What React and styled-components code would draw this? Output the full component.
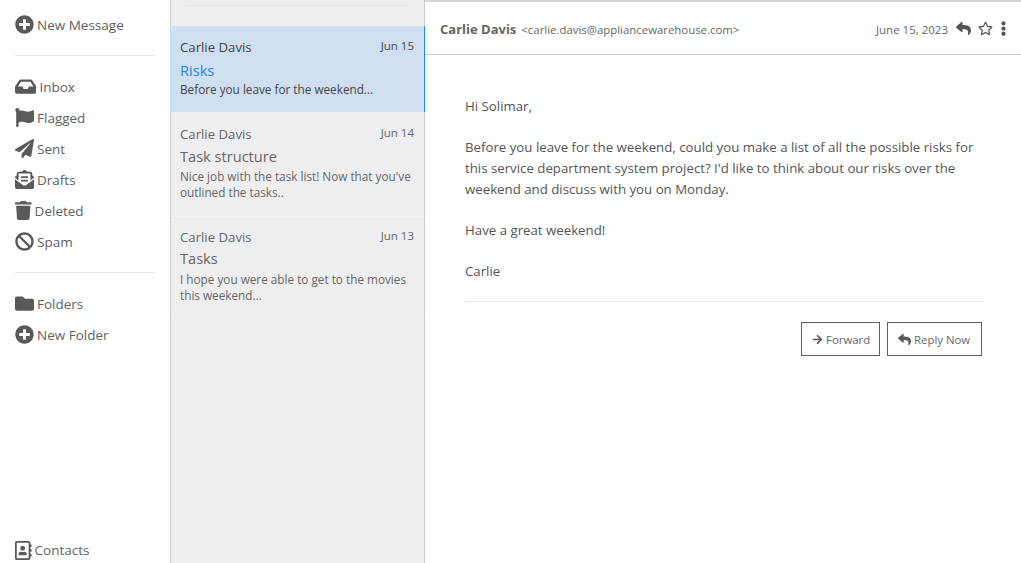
import React from "react";
import styled, { createGlobalStyle } from "styled-components";
import {
  FaPlusCircle, FaInbox, FaFlag, FaPaperPlane, FaEnvelopeOpenText, FaTrash, FaBan,
  FaFolder, FaRegAddressBook, FaReply, FaRegStar, FaEllipsisV, FaArrowRight,
} from "react-icons/fa";

const Global = createGlobalStyle`
  html, body { margin: 0; padding: 0; height: 100%; background: #fff; }
  body { font-family: "Open Sans", "Liberation Sans", sans-serif; color: #555; overflow: hidden; }
  #root { height: 100%; }
`;

const Page = styled.div`
  display: flex;
  width: 1021px;
  height: 563px;
  overflow: hidden;
`;

const Sidebar = styled.nav`
  width: 170px;
  flex: none;
  box-sizing: border-box;
  padding: 9px 15px 0;
  display: flex;
  flex-direction: column;
  background: #fff;
`;

const NavItem = styled.a`
  display: flex;
  align-items: center;
  height: ${(p) => p.$height ?? 31}px;
  font-size: 13.5px;
  color: #5f5f5f;
  gap: 3px;
  svg { height: 19px; width: ${(p) => p.$iconWidth ?? 19}px; color: #5a5a5a; flex: none; }
`;

const Rule = styled.hr`
  border: 0;
  border-top: 1px solid #e4e4e4;
  margin: ${(p) => p.$margin};
`;

const Spacer = styled.div`
  flex: 1;
`;

const List = styled.section`
  width: 255px;
  flex: none;
  box-sizing: border-box;
  background: #eee;
  border-left: 1px solid #ccc;
  border-right: 1px solid #ccc;
  display: flex;
  flex-direction: column;
`;

const ListTop = styled.div`
  height: 26px;
  padding: 5px 15px 0;
  box-sizing: border-box;
`;

const Card = styled.article`
  box-sizing: border-box;
  height: ${(p) => p.$height}px;
  padding: ${(p) => p.$top}px 10px 0 9px;
  margin: 0 -1px;
  background: ${(p) => (p.$active ? "#cfdff0" : "#eee")};
  border-left: 1px solid ${(p) => (p.$active ? "#cfdff0" : "#ccc")};
  border-right: 1px solid ${(p) => (p.$active ? "#1e88e5" : "#ccc")};
  border-top: ${(p) => (p.$sep ? "1px solid #f3f3f3" : "0")};
  border-bottom: ${(p) => (p.$sep ? "1px solid #f3f3f3" : "0")};
  color: ${(p) => (p.$active ? "#444" : "#666")};
`;

const CardHead = styled.div`
  display: flex;
  justify-content: space-between;
  align-items: flex-start;
`;

const Sender = styled.span`
  font-size: 13.2px;
  line-height: 20px;
`;

const CardDate = styled.span`
  font-size: 11.5px;
  line-height: 17px;
`;

const Subject = styled.h3`
  margin: ${(p) => p.$gap}px 0 0;
  font-size: 14.6px;
  line-height: 21px;
  font-weight: 400;
  color: ${(p) => (p.$active ? "#1e88e5" : "#666")};
`;

const Preview = styled.p`
  margin: ${(p) => p.$gap}px 0 0;
  font-size: 11.75px;
  line-height: 15.5px;
`;

const Main = styled.main`
  flex: 1;
  min-width: 0;
  display: flex;
  flex-direction: column;
  border-top: 2px solid #d4d4d4;
`;

const Header = styled.header`
  height: 53px;
  flex: none;
  box-sizing: border-box;
  border-bottom: 1px solid #ccc;
  padding: 0 10px 0 15px;
  display: flex;
  align-items: center;
`;

const FromName = styled.strong`
  font-size: 13px;
  font-weight: 700;
  color: #666;
  padding-top: 2px;
`;

const FromMail = styled.span`
  font-size: 11.4px;
  color: #666;
  margin-left: 5px;
  padding-top: 2px;
`;

const HeaderDate = styled.span`
  margin-left: auto;
  font-size: 11.5px;
  color: #666;
  padding-top: 2px;
`;

const HeaderIcons = styled.div`
  display: flex;
  align-items: center;
  gap: 7px;
  margin-left: 8px;
  color: #555;
  svg { font-size: 15px; }
  svg:last-child { margin-left: -4px; }
`;

const Body = styled.div`
  padding: 41px 39px 0 40px;
`;

const Para = styled.p`
  margin: 0 0 20px;
  font-size: 13.26px;
  line-height: 21px;
  color: #555;
`;

const Actions = styled.div`
  display: flex;
  justify-content: flex-end;
  gap: 7px;
`;

const Button = styled.button`
  box-sizing: border-box;
  width: ${(p) => p.$width}px;
  height: 34px;
  padding: 0 0 0 10px;
  border: 1px solid #5f5f5f;
  background: #fff;
  font: 400 11.4px "Open Sans", sans-serif;
  color: #666;
  display: flex;
  align-items: center;
  gap: 3px;
  white-space: nowrap;
  svg { font-size: ${(p) => p.$icon}px; color: #5a5a5a; flex: none; }
`;

const messages = [
  { date: "Jun 15", subject: "Risks", preview: "Before you leave for the weekend...", active: true, height: 86, top: 11, gap: 3, previewGap: 1 },
  { date: "Jun 14", subject: "Task structure", preview: "Nice job with the task list! Now that you've outlined the tasks..", height: 104, top: 12, gap: 2, previewGap: 2 },
  { date: "Jun 13", subject: "Tasks", preview: "I hope you were able to get to the movies this weekend...", sep: true, height: 103, top: 10, gap: 1, previewGap: 3 },
];

export default function App() {
  return (
    <Page>
      <Global />
      <Sidebar>
        <NavItem><FaPlusCircle />New Message</NavItem>
        <Rule $margin="15px 0 15px" />
        <NavItem $iconWidth={21.4}><FaInbox />Inbox</NavItem>
        <NavItem><FaFlag />Flagged</NavItem>
        <NavItem><FaPaperPlane />Sent</NavItem>
        <NavItem><FaEnvelopeOpenText />Drafts</NavItem>
        <NavItem $iconWidth={16.6}><FaTrash />Deleted</NavItem>
        <NavItem><FaBan />Spam</NavItem>
        <Rule $margin="15px 0 15px" />
        <NavItem><FaFolder />Folders</NavItem>
        <NavItem><FaPlusCircle />New Folder</NavItem>
        <Spacer />
        <NavItem $height={26} $iconWidth={16.6}><FaRegAddressBook />Contacts</NavItem>
      </Sidebar>
      <List>
        <ListTop><Rule $margin="0" /></ListTop>
        {messages.map((m) => (
          <Card key={m.date} $active={m.active} $sep={m.sep} $height={m.height} $top={m.top}>
            <CardHead>
              <Sender>Carlie Davis</Sender>
              <CardDate>{m.date}</CardDate>
            </CardHead>
            <Subject $active={m.active} $gap={m.gap}>{m.subject}</Subject>
            <Preview $gap={m.previewGap}>{m.preview}</Preview>
          </Card>
        ))}
      </List>
      <Main>
        <Header>
          <FromName>Carlie Davis</FromName>
          <FromMail>&lt;carlie.davis@appliancewarehouse.com&gt;</FromMail>
          <HeaderDate>June 15, 2023</HeaderDate>
          <HeaderIcons><FaReply /><FaRegStar /><FaEllipsisV /></HeaderIcons>
        </Header>
        <Body>
          <Para>Hi Solimar,</Para>
          <Para>Before you leave for the weekend, could you make a list of all the possible risks for this service department system project? I'd like to think about our risks over the weekend and discuss with you on Monday.</Para>
          <Para>Have a great weekend!</Para>
          <Para>Carlie</Para>
          <Rule $margin="-1px 0 20px" />
          <Actions>
            <Button $icon={11} $width={79}><FaArrowRight />Forward</Button>
            <Button $icon={13} $width={95}><FaReply />Reply Now</Button>
          </Actions>
        </Body>
      </Main>
    </Page>
  );
}
